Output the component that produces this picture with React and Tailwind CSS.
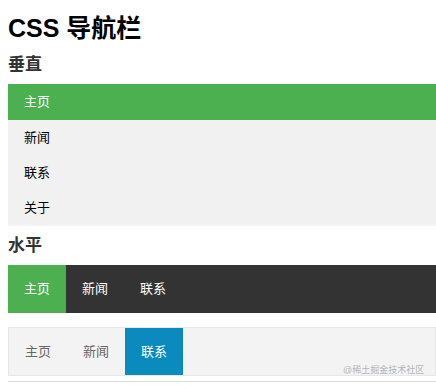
import React from 'react';

const verticalItems = [
  { label: '主页', active: true, h: 'h-[36px]' },
  { label: '新闻', h: 'h-[35px]' },
  { label: '联系', h: 'h-[35px]' },
  { label: '关于', h: 'h-[36px]' },
];

const darkItems = [
  { label: '主页', active: true },
  { label: '新闻' },
  { label: '联系' },
];

const lightItems = [
  { label: '主页' },
  { label: '新闻' },
  { label: '联系', active: true },
];

const App = () => {
  return (
    <div className="relative w-[436px] h-[385px] overflow-hidden bg-white pl-[8px] font-['Liberation_Sans','Noto_Sans_CJK_SC',sans-serif]">
      {/* Title */}
      <div className="mt-[13px] h-[30px] leading-[30px] text-[25px] font-bold text-black">CSS 导航栏</div>

      {/* Vertical nav */}
      <div className="mt-[11px] h-[22px] leading-[22px] text-[17px] font-bold text-[#333]">垂直</div>
      <ul className="mt-[8px] bg-[#f1f1f1]">
        {verticalItems.map((item) => (
          <li
            key={item.label}
            className={`${item.h} flex items-center px-[16px] text-[13px] ${
              item.active ? 'bg-[#4caf50] text-white' : 'text-black'
            }`}
          >
            {item.label}
          </li>
        ))}
      </ul>

      {/* Horizontal nav */}
      <div className="mt-[9px] h-[22px] leading-[22px] text-[17px] font-bold text-[#333]">水平</div>
      <ul className="mt-[8px] h-[48px] flex bg-[#333333]">
        {darkItems.map((item) => (
          <li
            key={item.label}
            className={`w-[58px] flex items-center justify-center text-[13px] text-white ${
              item.active ? 'bg-[#4caf50]' : ''
            }`}
          >
            {item.label}
          </li>
        ))}
      </ul>

      <ul className="mt-[14px] h-[49px] flex border border-[#e7e7e7] bg-[#f3f3f3]">
        {lightItems.map((item) => (
          <li
            key={item.label}
            className={`w-[58px] flex items-center justify-center text-[13px] ${
              item.active ? 'bg-[#0b8bbd] text-white' : 'text-[#666]'
            }`}
          >
            {item.label}
          </li>
        ))}
      </ul>
      <div className="mt-[5px] h-px bg-[#dddddd]" />

      {/* Watermark */}
      <span className="absolute left-[343px] top-[364px] text-[9px] leading-[12px] text-[#b5b5b5]">@稀土掘金技术社区</span>
    </div>
  );
};

export default App;
